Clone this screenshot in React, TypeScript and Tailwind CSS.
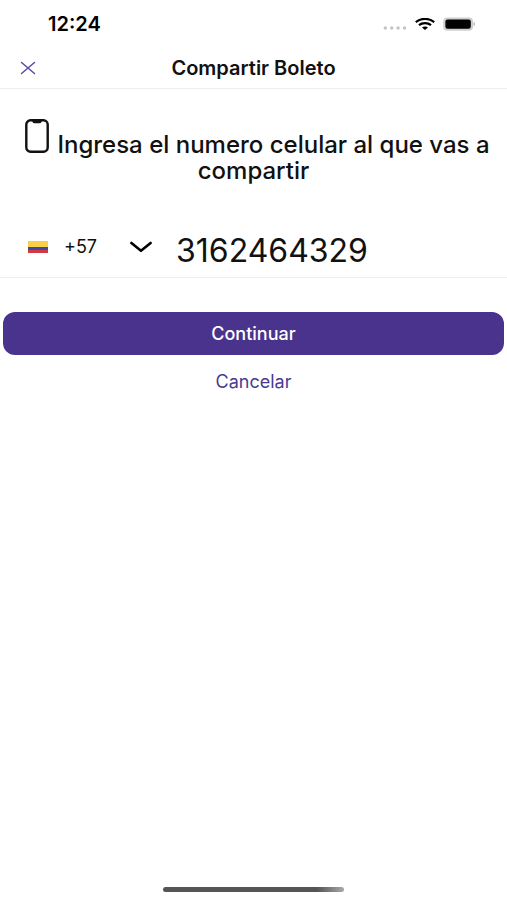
import { useState } from "react";

function StatusBar() {
  return (
    <div className="flex h-12 items-center justify-between pl-12 pr-8 text-black">
      <time className="text-xl font-semibold leading-6">12:24</time>
      <div className="flex items-center gap-2">
        <svg className="mt-2 h-1 w-6" viewBox="0 0 24 4" fill="#c4c4c4" aria-hidden="true">
          <circle cx="2.3" cy="2" r="1.7" />
          <circle cx="8.7" cy="2" r="1.7" />
          <circle cx="15.1" cy="2" r="1.7" />
          <circle cx="21.5" cy="2" r="1.7" />
        </svg>
        <svg className="h-3 w-5" viewBox="0 0 20 12" fill="none" stroke="#000" strokeWidth="2.2" role="img" aria-label="Wi-Fi">
          <path d="M0.8 4.1 C5.8 -0.2 14.2 -0.2 19.2 4.1" />
          <path d="M4 7.2 C7.2 4.4 12.8 4.4 16 7.2" />
          <path d="M7 9.6 C8.6 8.2 11.4 8.2 13 9.6 L10 12 Z" fill="#000" stroke="none" />
        </svg>
        <svg className="h-4 w-8" viewBox="0 0 32 16" role="img" aria-label="Batería">
          <rect x="0.2" y="1.4" width="29.8" height="13.4" rx="4" fill="#cfcfcf" />
          <rect x="2.4" y="3.4" width="25.4" height="9.4" rx="2.2" fill="#000" />
          <path d="M30.6 5.8 C32.2 6.5 32.2 9.7 30.6 10.4 Z" fill="#aaa" />
        </svg>
      </div>
    </div>
  );
}

function PhoneIcon() {
  return (
    <svg className="ml-2 mr-2 inline-block h-[34px] w-6 align-baseline" viewBox="0 0 24 34" fill="none" aria-hidden="true">
      <rect x="1.3" y="1.3" width="21.4" height="31.4" rx="4.2" stroke="#111" strokeWidth="2.4" />
      <path d="M6.5 1.4 H17.5 C16.6 1.8 16.5 4.2 14.6 4.2 H9.4 C7.5 4.2 7.4 1.8 6.5 1.4 Z" fill="#111" />
    </svg>
  );
}

function ColombiaFlag() {
  return (
    <svg className="h-3 w-5 shrink-0" viewBox="0 0 20 12" aria-hidden="true">
      <rect width="20" height="6" fill="#f8d048" />
      <rect y="6" width="20" height="3" fill="#3c4ba8" />
      <rect y="9" width="20" height="3" fill="#d13a43" />
    </svg>
  );
}

export default function App() {
  const [code, setCode] = useState("+57");
  const [phone, setPhone] = useState("3162464329");

  return (
    <div className="flex min-h-screen flex-col bg-white font-['Inter','Liberation_Sans',sans-serif] text-[#111111]">
      <StatusBar />
      <header className="grid h-[41px] grid-cols-[1fr_auto_1fr] items-center border-b border-[#eeeeee] px-5">
        <button type="button" aria-label="Cerrar" className="justify-self-start">
          <svg className="h-4 w-4" viewBox="0 0 16 16" fill="none" stroke="#5a4ba3" strokeWidth="1.5" strokeLinecap="round">
            <path d="M1.5 2.5 L14.5 13.5 M14.5 2.5 L1.5 13.5" />
          </svg>
        </button>
        <h1 className="text-xl font-semibold leading-6">Compartir Boleto</h1>
      </header>

      <main>
        <h2 className="px-4 pt-[30px] text-center text-2xl font-medium leading-[26px]">
          <PhoneIcon />
          Ingresa el numero celular al que vas a compartir
        </h2>

        <form onSubmit={(event) => event.preventDefault()}>
          <div className="mt-8 flex h-[62px] items-center border-b border-[#eeeeee] px-7">
            <div className="flex w-[124px] shrink-0 items-center">
              <ColombiaFlag />
              <select
                aria-label="Código de país"
                value={code}
                onChange={(event) => setCode(event.target.value)}
                className="ml-4 min-w-0 flex-1 appearance-none bg-transparent text-lg leading-6 outline-none"
              >
                <option value="+57">+57</option>
              </select>
              <svg className="pointer-events-none h-3 w-[22px] shrink-0" viewBox="0 0 22 12" fill="none" stroke="#000" strokeWidth="2.6" strokeLinecap="round" strokeLinejoin="round" aria-hidden="true">
                <path d="M1.4 2 L11 9.8 L20.6 2" />
              </svg>
            </div>
            <input
              type="tel"
              aria-label="Número celular"
              value={phone}
              onChange={(event) => setPhone(event.target.value)}
              className="ml-6 mt-2 min-w-0 flex-1 bg-transparent text-[32px] leading-9 outline-none"
            />
          </div>

          <div className="flex flex-col gap-[15px] px-[3px] pt-[34px]">
            <button type="submit" className="h-[43px] rounded-xl bg-[#4a338d] text-lg font-medium leading-6 text-white">
              Continuar
            </button>
            <button type="button" className="text-lg leading-6 text-[#4a3a94]">
              Cancelar
            </button>
          </div>
        </form>
      </main>

      <div className="mx-auto mb-2 mt-auto h-[5px] w-[181px] rounded-full bg-linear-to-r from-[#555555] from-85% to-[#aaaaaa]" />
    </div>
  );
}
